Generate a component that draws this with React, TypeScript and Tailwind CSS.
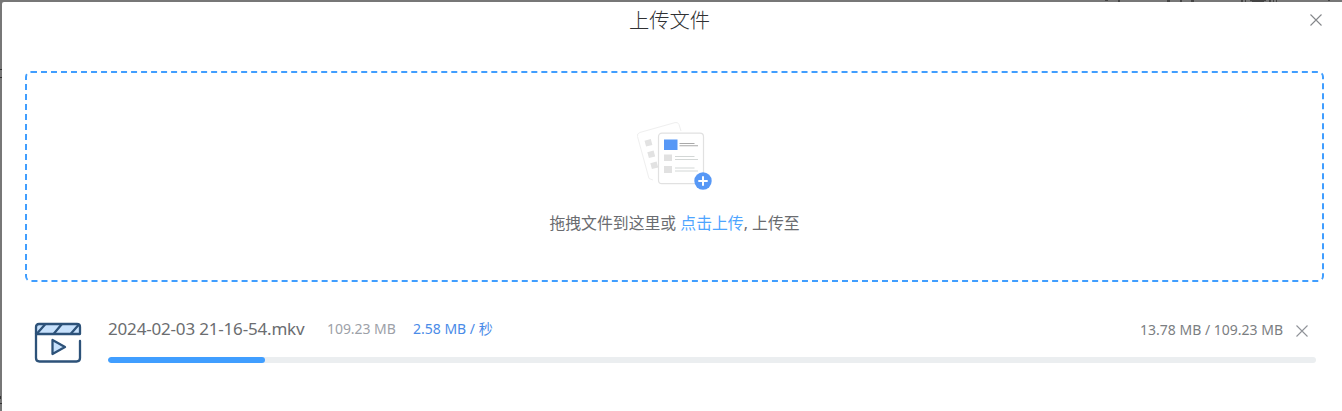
import React from "react";

function CloseIcon({ className }: { className: string }) {
  return (
    <svg className={className} viewBox="0 0 12 12" fill="none" stroke="currentColor" strokeWidth="1.1" aria-hidden="true">
      <path d="M.5.5 11.5 11.5M11.5.5.5 11.5" />
    </svg>
  );
}

function DocumentsIcon() {
  return (
    <svg className="h-[74px] w-[78px]" viewBox="0 0 78 74" fill="none" aria-hidden="true">
      <path d="M17 62 13 60.5 1.5 18.5Q.8 15.5 3.800 14.500L39 4.600Q42 3.900 43 6.500L45 13" stroke="#efefef" />
      <g fill="#e2e2e2">
        <path d="m8.500 22.700 6.300-1.600 1.600 5.800-6.300 1.600Z" />
        <path d="m11.300 34.200 6.300-1.600 1.600 5.800-6.300 1.600Z" />
        <path d="m14.300 45.200 6.300-1.600 1.600 5.800-6.300 1.600Z" />
      </g>
      <rect x="22.500" y="15.200" width="45" height="50.500" rx="3.500" fill="white" stroke="#e1e1e1" strokeWidth="1.200" />
      <rect x="28" y="21.500" width="13.500" height="10.500" fill="#5798f6" />
      <g fill="#e1e1e1">
        <rect x="28" y="36.500" width="8" height="6.500" />
        <rect x="28" y="48" width="8" height="7" />
      </g>
      <path d="M43.500 25.500H58.500M43.500 27.800H62" stroke="#a9a9a9" strokeWidth="1.100" />
      <path d="M39 38.500H58.500M39 41.500H62M39 50H58.500M39 53H62" stroke="#d3d7d6" />
      <circle cx="67" cy="63" r="8.700" fill="#5798f6" />
      <path d="M67 58.300V67.700M62.300 63H71.700" stroke="white" strokeWidth="2" />
    </svg>
  );
}

function VideoIcon() {
  return (
    <svg className="mt-px h-[42px] w-[48px]" viewBox="0 0 48 42" fill="none" stroke="#2d5279" strokeWidth="2.300" strokeLinecap="round" strokeLinejoin="round" aria-hidden="true">
      <path d="M5 2H43Q46 2 46 5V12H2V5Q2 2 5 2Z" fill="#c7e1fc" />
      <path d="M3.500 11 11 2.500M20 11.500 27.500 2.500M37 11.500 44.500 3" />
      <path d="M2 12V36Q2 39.500 5.500 39.500H42.500Q46 39.500 46 36V19" />
      <path d="M18.500 18V32L31 25Z" fill="#c7e1fc" />
    </svg>
  );
}

// Slivers of the page that stay visible behind the dialog's edges.
function TopBackdrop() {
  return (
    <svg className="block h-[2px] w-full" viewBox="0 0 1342 2" fill="#444" aria-hidden="true">
      <path d="M1105 0h3v1h-3ZM1118 0h2v2h-2ZM1167 0h3v2h-3ZM1180 0h2v2h-2ZM1191 0h3v2h-3ZM1241 0h2v2h-2ZM1245 0h1v2h-1ZM1250 0h16v1h-2v1h-12v-1h-2ZM1269 0h2v2h-2ZM1273 0h1v2h-1ZM1276 0h1v2h-1ZM1328 0h2v1h-2Z" />
    </svg>
  );
}

function LeftBackdrop() {
  return (
    <svg className="block h-[409px] w-[2px]" viewBox="0 0 2 409" fill="#333" aria-hidden="true">
      <path d="M0 67h2v1h-2ZM0 75h2v1h-2ZM0 394h1v3h-1ZM0 401h2v1h-2Z" />
    </svg>
  );
}

export default function App() {
  return (
    <main className="h-[411px] w-full overflow-hidden bg-[#777] font-['Noto_Sans','Noto_Sans_CJK_SC',sans-serif]">
      <TopBackdrop />
      <div className="flex h-[409px]">
        <LeftBackdrop />
        <section className="flex h-full flex-1 flex-col rounded-tl-[2px] bg-white pr-[18px] pl-[23px]">
          <header className="flex h-[36px] items-center">
            <h1 className="ml-[4px] flex-1 text-center text-[20.3px] leading-[36px] font-light text-[#303133]">上传文件</h1>
            <button aria-label="关闭" className="mr-[2px] text-[#85878b]">
              <CloseIcon className="size-3" />
            </button>
          </header>

          <div className="mt-[33px] flex h-[211px] flex-col items-center rounded-[6px] border-2 border-dashed border-[#409eff] pt-[45px] text-[#6a6c70]">
            <DocumentsIcon />
            <p className="mt-[19px] text-[15.85px] leading-6 whitespace-pre">
              拖拽文件到这里或 <a className="text-[#4ea5ff]">点击上传</a>, 上传至
            </p>
          </div>

          <div className="mt-[39px] flex pr-[8px] pl-[9px]">
            <VideoIcon />
            <div className="ml-[26px] flex-1">
              <div className="flex h-[16px] items-center whitespace-nowrap">
                <span className="w-[219px] text-[17px] tracking-[-0.18px] text-[#6b6d70]">2024-02-03 21-16-54.mkv</span>
                <span className="-mt-px w-[86px] text-[14px] tracking-[-0.05px] text-[#9da1a8]">109.23 MB</span>
                <span className="-mt-px text-[14px] text-[#4a8be8]">2.58 MB / 秒</span>
                <span className="ml-auto text-[14px] text-[#7b7e82]">13.78 MB / 109.23 MB</span>
                <button aria-label="取消上传" className="mt-[3px] mr-[8px] ml-[13px] text-[#909399]">
                  <CloseIcon className="size-3" />
                </button>
              </div>
              <div className="mt-5 h-[6px] overflow-hidden rounded-full bg-[#ebeef0]">
                <div className="h-full w-[157px] rounded-full bg-[#409eff]" />
              </div>
            </div>
          </div>
        </section>
      </div>
    </main>
  );
}
